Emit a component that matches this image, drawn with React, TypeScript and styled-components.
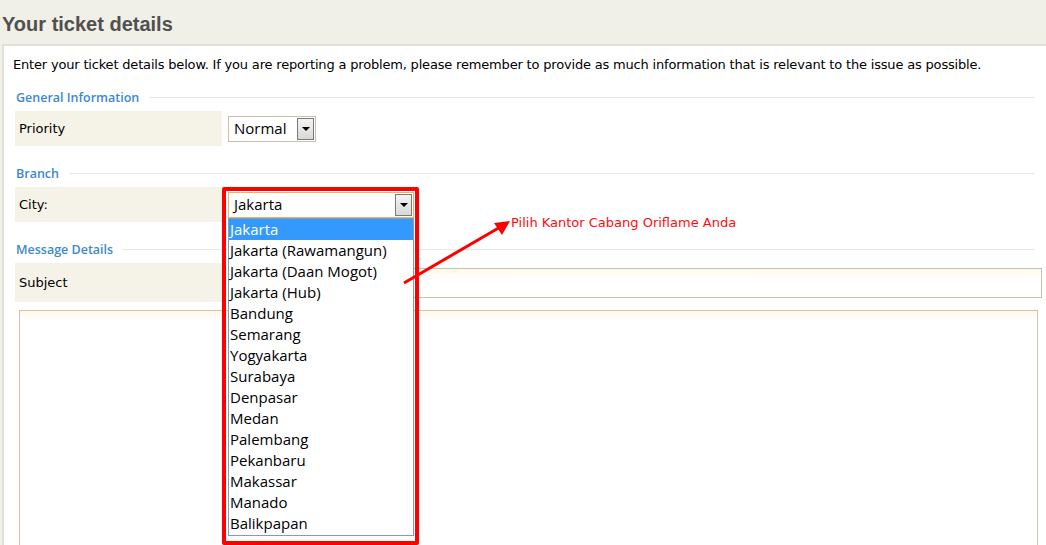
import React from "react";
import styled, { createGlobalStyle } from "styled-components";

const GlobalStyle = createGlobalStyle`
  html, body {
    margin: 0;
    padding: 0;
    background: #f0efe8;
    overflow: hidden;
  }
  body {
    font-family: "DejaVu Sans", Verdana, sans-serif;
    font-size: 13px;
    color: #000;
  }
`;

const Page = styled.div`
  width: 1046px;
  height: 545px;
  overflow: hidden;
`;

const Title = styled.h1`
  margin: 0;
  height: 44px;
  box-sizing: border-box;
  padding: 5px 0 0 2px;
  display: flex;
  align-items: center;
  font-family: "Liberation Sans", Arial, sans-serif;
  font-weight: bold;
  font-size: 20px;
  color: #505050;
`;

const Panel = styled.div`
  margin-left: 2px;
  width: 1060px;
  height: 520px;
  background: #fff;
  border-top: 2px solid #e2e1d8;
  border-left: 2px solid #e2e1d8;
  padding: 11px 0 0 9px;
  box-sizing: border-box;
`;

const Intro = styled.p`
  margin: 0;
  line-height: 16px;
  letter-spacing: -0.18px;
`;

const Content = styled.div`
  width: 1020px;
  margin-left: 2px;
`;

const SectionHead = styled.div<{ $first?: boolean }>`
  display: flex;
  align-items: center;
  margin-top: ${(p) => (p.$first ? "16px" : "19px")};
  margin-bottom: 6px;
  height: 16px;
  padding-left: 1px;
  font-family: "Open Sans", sans-serif;
  font-size: 12.5px;
  font-weight: 600;
  color: #3c88d0;
`;

const HeadLine = styled.span`
  flex: 1;
  height: 1px;
  margin-left: 10px;
  background: #e8e8e6;
`;

const Row = styled.div<{ $h: number }>`
  display: flex;
  align-items: center;
  height: ${(p) => p.$h}px;
`;

const Label = styled.div`
  flex-shrink: 0;
  align-self: stretch;
  width: 203px;
  padding-left: 4px;
  background: #f5f3e8;
  display: flex;
  align-items: center;
`;

const Field = styled.div`
  flex-shrink: 0;
  position: relative;
  margin-left: 6px;
`;

const Select = styled.div<{ $w: number; $focus?: boolean }>`
  width: ${(p) => p.$w}px;
  height: 26px;
  box-sizing: border-box;
  border: 1px solid ${(p) => (p.$focus ? "#e2b46a" : "#c9c0ad")};
  background: #fff;
  display: flex;
  align-items: center;
  justify-content: space-between;
  padding: 0 1px 1px 5px;
  font-family: "Open Sans", sans-serif;
  font-size: 15px;
`;

const ArrowButton = styled.div`
  width: 15px;
  height: 20px;
  margin-top: 1px;
  border: 1px solid #7a7a7a;
  background: linear-gradient(#f4f4f4, #d8d8d8);
  display: flex;
  align-items: center;
  justify-content: center;
  &::after {
    content: "";
    border-left: 4px solid transparent;
    border-right: 4px solid transparent;
    border-top: 4px solid #000;
  }
`;

const ListBox = styled.div`
  position: absolute;
  top: 26px;
  left: 0;
  width: 186px;
  height: 318px;
  box-sizing: border-box;
  border: 1px solid #7f9db9;
  background: #fff;
  z-index: 2;
  font-family: "Open Sans", sans-serif;
  font-size: 15px;
`;

const Option = styled.div<{ $active?: boolean }>`
  height: 21px;
  line-height: 21px;
  padding-left: 1px;
  background: ${(p) => (p.$active ? "#3399ff" : "transparent")};
  color: ${(p) => (p.$active ? "#fff" : "#000")};
`;

const TextInput = styled.div`
  width: 814px;
  height: 30px;
  box-sizing: border-box;
  border: 1px solid #c9c0ad;
  background: linear-gradient(#fff8e8, #fff 10px);
`;

const TextArea = styled.div`
  margin: 8px 0 0 4px;
  width: 1019px;
  height: 260px;
  box-sizing: border-box;
  border: 1px solid #cdc3b0;
  border-bottom: none;
  background: linear-gradient(#fff8e8, #fff 10px);
`;

const Highlight = styled.div`
  position: absolute;
  left: -6px;
  top: -5px;
  width: 197px;
  height: 358px;
  box-sizing: border-box;
  border: 4px solid #ff0000;
  border-radius: 2px;
  z-index: 3;
  pointer-events: none;
`;

const Pointer = styled.svg`
  position: absolute;
  left: 170px;
  top: 25px;
  z-index: 3;
  overflow: visible;
`;

const Note = styled.span`
  position: absolute;
  left: 283px;
  top: 23px;
  white-space: nowrap;
  font-size: 13px;
  color: #ff0d0d;
  z-index: 3;
`;

const cities = [
  "Jakarta",
  "Jakarta (Rawamangun)",
  "Jakarta (Daan Mogot)",
  "Jakarta (Hub)",
  "Bandung",
  "Semarang",
  "Yogyakarta",
  "Surabaya",
  "Denpasar",
  "Medan",
  "Palembang",
  "Pekanbaru",
  "Makassar",
  "Manado",
  "Balikpapan",
];

export default function App() {
  return (
    <Page>
      <GlobalStyle />
      <Title>Your ticket details</Title>
      <Panel>
        <Intro>
          Enter your ticket details below. If you are reporting a problem, please remember to
          provide as much information that is relevant to the issue as possible.
        </Intro>
        <Content>
          <SectionHead $first>
            General Information
            <HeadLine />
          </SectionHead>
          <Row $h={35}>
            <Label>Priority</Label>
            <Field>
              <Select $w={88}>
                Normal
                <ArrowButton />
              </Select>
            </Field>
          </Row>

          <SectionHead>
            Branch
            <HeadLine />
          </SectionHead>
          <Row $h={35}>
            <Label>City:</Label>
            <Field>
              <Select $w={186} $focus>
                Jakarta
                <ArrowButton />
              </Select>
              <ListBox>
                {cities.map((c, i) => (
                  <Option key={c} $active={i === 0}>
                    {c}
                  </Option>
                ))}
              </ListBox>
              <Highlight />
              <Pointer width="110" height="70">
                <line x1="6" y1="66" x2="104" y2="9" stroke="#ff0000" strokeWidth="3" />
                <polygon points="112,4 96,6 104,18" fill="#ff0000" />
              </Pointer>
              <Note>Pilih Kantor Cabang Oriflame Anda</Note>
            </Field>
          </Row>

          <SectionHead>
            Message Details
            <HeadLine />
          </SectionHead>
          <Row $h={39}>
            <Label>Subject</Label>
            <Field>
              <TextInput />
            </Field>
          </Row>
          <TextArea />
        </Content>
      </Panel>
    </Page>
  );
}
